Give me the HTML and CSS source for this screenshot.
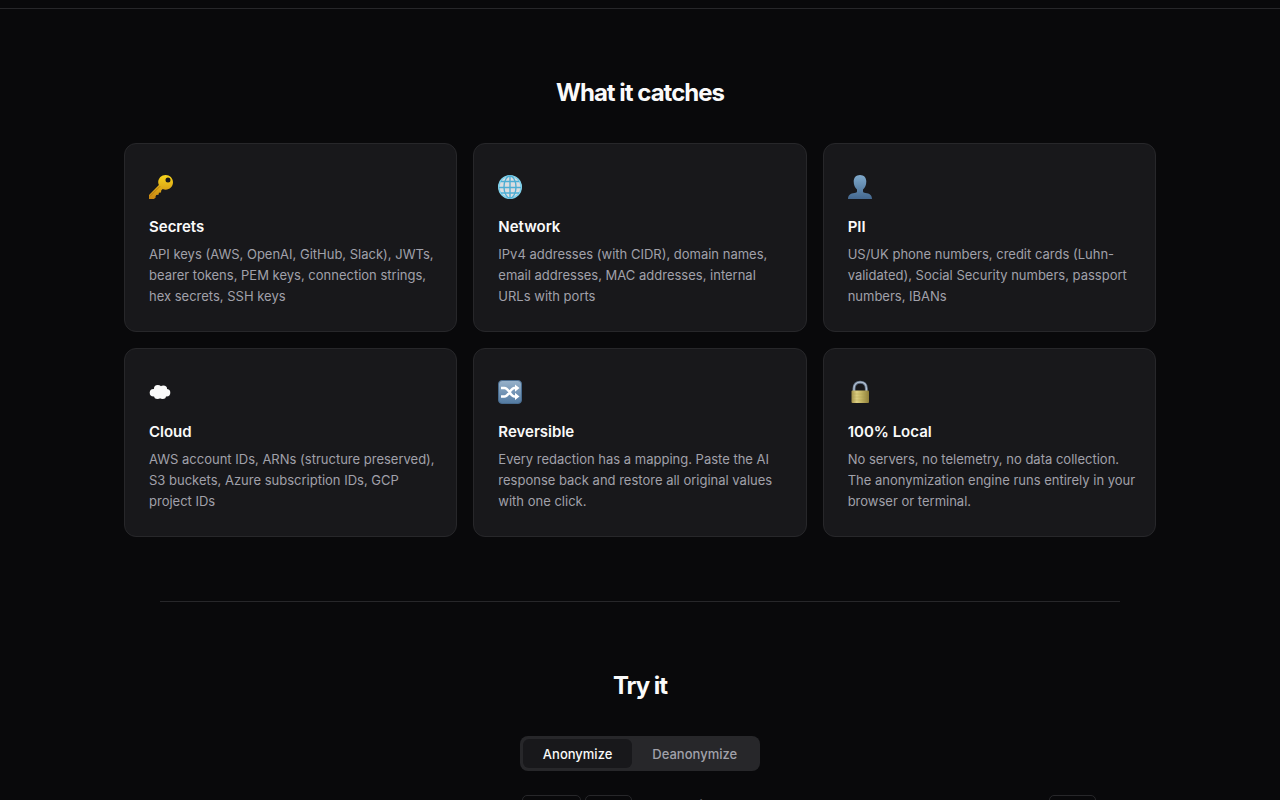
FILE: index.html
```html
<!DOCTYPE html>
<html lang="en">
<head>
    <meta charset="UTF-8">
    <meta name="viewport" content="width=device-width, initial-scale=1.0">
    <title>Anonymizer</title>
    <link rel="stylesheet" href="styles.css">
</head>
<body>

    <!-- Features -->
    <section class="features">
        <h2>What it catches</h2>
        <div class="feature-grid">
            <div class="card">
                <div class="icon">
                    <svg viewBox="0 0 24 24" aria-hidden="true">
                        <defs>
                            <linearGradient id="gold" x1="0" y1="0" x2="0" y2="1">
                                <stop offset="0" stop-color="#f8d51c"/>
                                <stop offset="1" stop-color="#c78513"/>
                            </linearGradient>
                        </defs>
                        <path fill="url(#gold)" fill-rule="evenodd" d="M16.6 0C20.7 0 24 3.2 24 7.3s-3.300 7.400-7.400 7.400c-1 0-2-.2-2.900-.6l-1.500 1.400-.2 2-2.100.3-.3 2-2.300.3-.8 1.300.2 1-1.800 1.500H0v-4L9.900 10c-.5-.9-.7-1.800-.7-2.700C9.200 3.200 12.500 0 16.600 0zM19 2.600a2.500 2.500 0 1 0 0 5 2.500 2.500 0 0 0 0-5z"/>
                        <path d="M1 21.300l10-10" stroke="#a96d10" stroke-width=".8" fill="none"/>
                    </svg>
                </div>
                <h3>Secrets</h3>
                <p>API keys (AWS, OpenAI, GitHub, Slack), JWTs, bearer tokens, PEM keys, connection strings, hex secrets, SSH keys</p>
            </div>
            <div class="card">
                <div class="icon">
                    <svg viewBox="0 0 24 24" aria-hidden="true">
                        <circle cx="12" cy="12" r="11.500" fill="#dcdde0"/>
                        <g fill="none" stroke="#4faed4" stroke-width="1.400">
                            <circle cx="12" cy="12" r="11.200" stroke="#7fd0ea" stroke-width="1.600"/>
                            <ellipse cx="12" cy="12" rx="6" ry="11"/>
                            <path d="M12 1v22M1 12.500h22M3 6.500h18M3 18h18"/>
                        </g>
                    </svg>
                </div>
                <h3>Network</h3>
                <p>IPv4 addresses (with CIDR), domain names, email addresses, MAC addresses, internal URLs with ports</p>
            </div>
            <div class="card">
                <div class="icon">
                    <svg viewBox="0 0 24 24" aria-hidden="true">
                        <defs>
                            <linearGradient id="blue" x1="0" y1="0" x2="0" y2="1">
                                <stop offset="0" stop-color="#7fa9cb"/>
                                <stop offset="1" stop-color="#44688f"/>
                            </linearGradient>
                        </defs>
                        <path fill="url(#blue)" d="M12 0c4 0 6.300 2.800 6.300 6.500 0 3.500-1.300 6.500-3.300 8v1.700c0 1 .8 1.500 2.500 1.700 4 .4 6.500 2.100 6.500 6.100H0c0-4 2.500-5.700 6.500-6.100 1.700-.2 2.500-.7 2.500-1.700v-1.700c-2-1.500-3.300-4.500-3.300-8C5.700 2.800 8 0 12 0z"/>
                    </svg>
                </div>
                <h3>PII</h3>
                <p>US/UK phone numbers, credit cards (Luhn-validated), Social Security numbers, passport numbers, IBANs</p>
            </div>
            <div class="card">
                <div class="icon">
                    <svg viewBox="0 0 24 24" aria-hidden="true">
                        <g fill="#fafafa">
                            <circle cx="4.500" cy="12.800" r="3.800"/>
                            <circle cx="8.800" cy="9" r="3.900"/>
                            <circle cx="14.400" cy="9.300" r="3.700"/>
                            <circle cx="17.600" cy="12.800" r="3.700"/>
                            <circle cx="8.500" cy="15.400" r="3.500"/>
                            <circle cx="13.600" cy="15.400" r="3.500"/>
                            <path d="M5 9h12v7H5z"/>
                        </g>
                    </svg>
                </div>
                <h3>Cloud</h3>
                <p>AWS account IDs, ARNs (structure preserved), S3 buckets, Azure subscription IDs, GCP project IDs</p>
            </div>
            <div class="card">
                <div class="icon">
                    <svg viewBox="0 0 24 24" aria-hidden="true">
                        <defs>
                            <linearGradient id="tile" x1="0" y1="0" x2="0" y2="1">
                                <stop offset="0" stop-color="#98b2ca"/>
                                <stop offset="1" stop-color="#527aa2"/>
                            </linearGradient>
                        </defs>
                        <rect x=".5" y=".5" width="23" height="23" rx="3.500" fill="url(#tile)" stroke="#486b8e"/>
                        <g fill="none" stroke="#fff" stroke-width="2.400">
                            <path d="M3 8h3.500c4.500 0 5.500 8.500 10 8.500H18M3 16.500h3.500c4.500 0 5.500-8.500 10-8.500H18"/>
                        </g>
                        <path fill="#fff" d="M17 4.500L21.500 8 17 11.700zM17 12.800l4.500 3.700-4.500 3.600z"/>
                    </svg>
                </div>
                <h3>Reversible</h3>
                <p>Every redaction has a mapping. Paste the AI response back and restore all original values with one click.</p>
            </div>
            <div class="card">
                <div class="icon">
                    <svg viewBox="0 0 24 24" aria-hidden="true">
                        <defs>
                            <linearGradient id="brass" x1="0" y1="0" x2="1" y2="0">
                                <stop offset="0" stop-color="#a3924b"/>
                                <stop offset=".3" stop-color="#ddcf82"/>
                                <stop offset=".55" stop-color="#c4b565"/>
                                <stop offset="1" stop-color="#8f7e39"/>
                            </linearGradient>
                        </defs>
                        <path d="M6 13V8.500c0-4 2.500-6.300 6.200-6.300s6.200 2.300 6.200 6.300V13" fill="none" stroke="#65758a" stroke-width="3"/>
                        <path d="M6 13V8.500c0-4 2.500-6.300 6.200-6.300s6.200 2.300 6.200 6.300V13" fill="none" stroke="#b4c2d4" stroke-width="1.300"/>
                        <rect x="3.500" y="10.500" width="17.500" height="12.500" rx="1" fill="url(#brass)"/>
                        <path d="M4 14h16.500M4 17h16.500M4 20h16.500" stroke="#a69547" stroke-width=".3"/>
                    </svg>
                </div>
                <h3>100% Local</h3>
                <p>No servers, no telemetry, no data collection. The anonymization engine runs entirely in your browser or terminal.</p>
            </div>
        </div>
    </section>

    <!-- Demo -->
    <section class="demo">
        <h2>Try it</h2>
        <div class="tabs">
            <button class="tab active" type="button">Anonymize</button>
            <button class="tab" type="button">Deanonymize</button>
        </div>
        <div class="panels">
            <div class="panel-header">
                <label for="input">Input</label>
                <div class="actions">
                    <button class="wide" type="button">Sample</button>
                    <button type="button">Clear</button>
                </div>
            </div>
            <div class="panel-header">
                <label for="output">Anonymized</label>
                <div class="actions">
                    <button type="button">Copy</button>
                </div>
            </div>
            <textarea id="input"></textarea>
            <textarea id="output" readonly></textarea>
        </div>
    </section>

</body>
</html>
```
FILE: styles.css
```css
* {
    box-sizing: border-box;
    margin: 0;
    padding: 0;
}

html {
    height: 100%;
    overflow: hidden;
}

body {
    font-family: Inter, "Liberation Sans", sans-serif;
    background-color: #09090b;
    color: #fafafa;
    height: 100%;
    padding-top: 8px;
    overflow: hidden;
}

h2 {
    font-size: 24px;
    font-weight: 700;
    line-height: 40px;
    letter-spacing: -1px;
    text-align: center;
    margin-bottom: 30px;
}

/* Features */
.features {
    border-top: 1px solid #27272a;
    padding: 64px 24px;
}

.feature-grid {
    display: grid;
    grid-template-columns: repeat(3, 1fr);
    gap: 16px;
    max-width: 1032px;
    margin: 0 auto;
}

.card {
    background-color: #18181b;
    border: 1px solid #27272a;
    border-radius: 12px;
    padding: 24px 16px 24px 24px;
}

.icon {
    display: flex;
    align-items: center;
    height: 38px;
    margin-bottom: 9px;
}

.icon svg {
    width: 24px;
    height: 24px;
}

.card h3 {
    font-size: 15px;
    font-weight: 600;
    line-height: 24px;
    margin-bottom: 5px;
}

.card p {
    font-size: 13px;
    line-height: 21px;
    color: #a1a1aa;
}

/* Demo */
.demo {
    max-width: 960px;
    margin: 0 auto;
    padding: 64px 24px;
    border-top: 1px solid #27272a;
}

.tabs {
    display: flex;
    width: fit-content;
    margin: 0 auto 24px;
    padding: 3px;
    background-color: #27272a;
    border-radius: 8px;
}

.tab {
    font-family: inherit;
    font-size: 13px;
    font-weight: 500;
    line-height: 17px;
    padding: 7px 20px 5px;
    border: none;
    border-radius: 6px;
    background: none;
    color: #a1a1aa;
    cursor: pointer;
}

.tab.active {
    background-color: #18181b;
    color: #fafafa;
}

.panels {
    display: grid;
    grid-template-columns: 1fr 1fr;
    gap: 8px 16px;
}

.panel-header {
    display: flex;
    justify-content: space-between;
    align-items: flex-start;
}

.panel-header label {
    font-size: 13px;
    font-weight: 500;
    line-height: 20px;
    color: #71717a;
}

.actions {
    display: flex;
    gap: 4px;
}

.actions button {
    font-family: inherit;
    font-size: 11px;
    min-width: 47px;
    height: 24px;
    border: 1px solid #27272a;
    border-radius: 5px;
    background: none;
    color: #a1a1aa;
    cursor: pointer;
}

.actions .wide {
    min-width: 59px;
}

.panels textarea {
    height: 200px;
    padding: 12px;
    background-color: #18181b;
    border: 1px solid #27272a;
    border-radius: 8px;
    color: #fafafa;
    resize: none;
}
```
